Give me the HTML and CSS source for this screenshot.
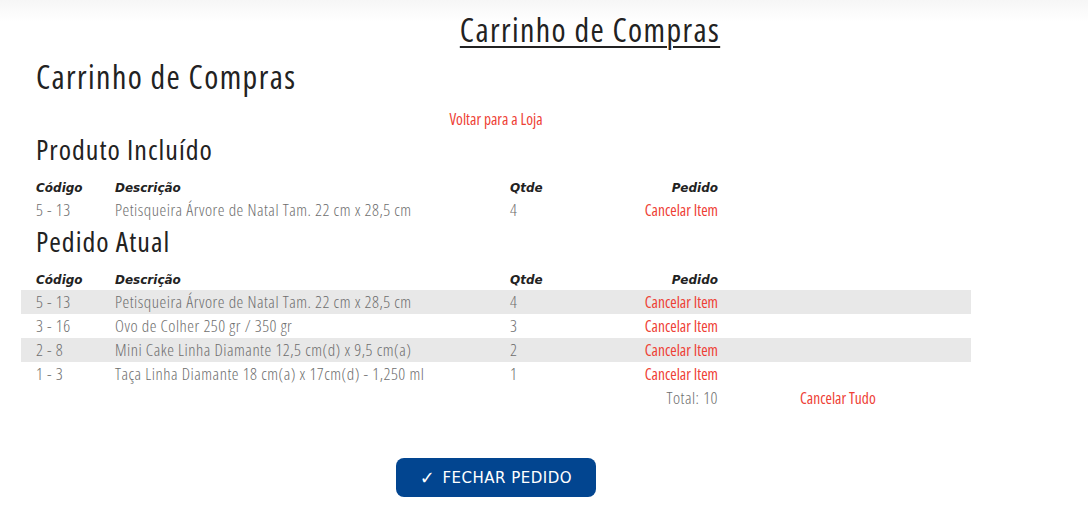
FILE: index.html
```html
<!DOCTYPE html>
<html lang="pt-BR">
<head>
  <meta charset="UTF-8">
  <title>Carrinho de Compras</title>
  <link rel="stylesheet" href="styles.css">
</head>
<body>
  <header class="topo">
    <h1>Carrinho de Compras</h1>
  </header>

  <div class="container">
    <h2>Carrinho de Compras</h2>
    <p class="voltar"><a href="#">Voltar para a Loja</a></p>

    <h3>Produto Incluído</h3>
    <table class="carrinho">
      <colgroup>
        <col class="c-cod"><col class="c-desc"><col class="c-qtd"><col class="c-ped"><col>
      </colgroup>
      <thead>
        <tr><th>Código</th><th>Descrição</th><th>Qtde</th><th class="dir">Pedido</th><th></th></tr>
      </thead>
      <tbody>
        <tr><td>5 - 13</td><td>Petisqueira Árvore de Natal Tam. 22 cm x 28,5 cm</td><td>4</td><td class="dir"><a href="#">Cancelar Item</a></td><td></td></tr>
      </tbody>
    </table>

    <h3 class="segundo">Pedido Atual</h3>
    <table class="carrinho listrado">
      <colgroup>
        <col class="c-cod"><col class="c-desc"><col class="c-qtd"><col class="c-ped"><col>
      </colgroup>
      <thead>
        <tr><th>Código</th><th>Descrição</th><th>Qtde</th><th class="dir">Pedido</th><th></th></tr>
      </thead>
      <tbody>
        <tr><td>5 - 13</td><td>Petisqueira Árvore de Natal Tam. 22 cm x 28,5 cm</td><td>4</td><td class="dir"><a href="#">Cancelar Item</a></td><td></td></tr>
        <tr><td>3 - 16</td><td>Ovo de Colher 250 gr / 350 gr</td><td>3</td><td class="dir"><a href="#">Cancelar Item</a></td><td></td></tr>
        <tr><td>2 - 8</td><td>Mini Cake Linha Diamante 12,5 cm(d) x 9,5 cm(a)</td><td>2</td><td class="dir"><a href="#">Cancelar Item</a></td><td></td></tr>
        <tr><td>1 - 3</td><td>Taça Linha Diamante 18 cm(a) x 17cm(d) - 1,250 ml</td><td>1</td><td class="dir"><a href="#">Cancelar Item</a></td><td></td></tr>
      </tbody>
      <tfoot>
        <tr><td></td><td></td><td></td><td class="dir">Total: 10</td><td class="tudo"><a href="#">Cancelar Tudo</a></td></tr>
      </tfoot>
    </table>

    <div class="acoes">
      <button type="button" class="btn-fechar"><span class="check">&#10003;</span>FECHAR PEDIDO</button>
    </div>
  </div>
</body>
</html>
```

FILE: styles.css
```css
body {
  margin: 0;
  font-family: "Open Sans", "DejaVu Sans Condensed", sans-serif;
  font-stretch: 75%;
  font-weight: 300;
  background-color: #fff;
  color: #6e6e6e;
}

a {
  color: #ee4035;
  font-weight: 400;
  text-decoration: none;
}

.topo {
  background: linear-gradient(#f6f6f6, #fff 22px);
  padding: 12px 0 0 92px;
  text-align: center;
}

.topo h1 {
  margin: 0;
  font-size: 32px;
  letter-spacing: 1.4px;
  font-weight: normal;
  color: #222;
  text-decoration: underline;
  text-decoration-thickness: 2px;
  text-underline-offset: 4px;
  line-height: 36px;
}

.container {
  width: 950px;
  margin-left: 21px;
  padding: 0 15px;
  box-sizing: border-box;
}

h2 {
  margin: 9px 0 0;
  font-size: 32px;
  letter-spacing: 1.4px;
  font-weight: normal;
  color: #222;
  line-height: 40px;
}

.voltar {
  margin: 14px 0 0;
  text-align: center;
  font-size: 15.5px;
  line-height: 16px;
}

h3 {
  margin: 6px 0 9px;
  font-size: 28px;
  letter-spacing: 1px;
  font-weight: normal;
  color: #222;
  line-height: 32px;
}

h3.segundo {
  margin-top: 3px;
}

.carrinho {
  width: 950px;
  margin: 0 -15px;
  border-collapse: collapse;
  table-layout: fixed;
}

.c-cod { width: 79px; }
.c-desc { width: 395px; }
.c-qtd { width: 120px; }
.c-ped { width: 118px; }

.carrinho th,
.carrinho td {
  height: 24px;
  padding: 0 15px;
  text-align: left;
  white-space: nowrap;
}

.carrinho th {
  font-family: "DejaVu Sans", Verdana, sans-serif;
  font-stretch: normal;
  font-size: 12px;
  font-weight: bold;
  font-style: italic;
  color: #222;
  vertical-align: bottom;
  line-height: 20px;
}

.carrinho td {
  font-size: 17px;
  letter-spacing: 0.5px;
  line-height: 24px;
}

.carrinho .dir {
  text-align: right;
}

.carrinho td a {
  font-size: 15.5px;
  letter-spacing: 0;
}

.listrado tbody tr:nth-child(odd) {
  background-color: #e8e8e8;
}

.carrinho .tudo {
  padding-left: 67px;
}

.acoes {
  margin-top: 48px;
  text-align: center;
}

.btn-fechar {
  width: 200px;
  height: 39px;
  background-color: #024590;
  color: #fff;
  border: none;
  border-radius: 8px;
  font-family: "DejaVu Sans", Verdana, sans-serif;
  font-stretch: normal;
  font-size: 15px;
  letter-spacing: 0.5px;
  cursor: pointer;
}

.check {
  font-size: 18px;
  font-weight: bold;
  margin-right: 7px;
  vertical-align: -1px;
}
```
